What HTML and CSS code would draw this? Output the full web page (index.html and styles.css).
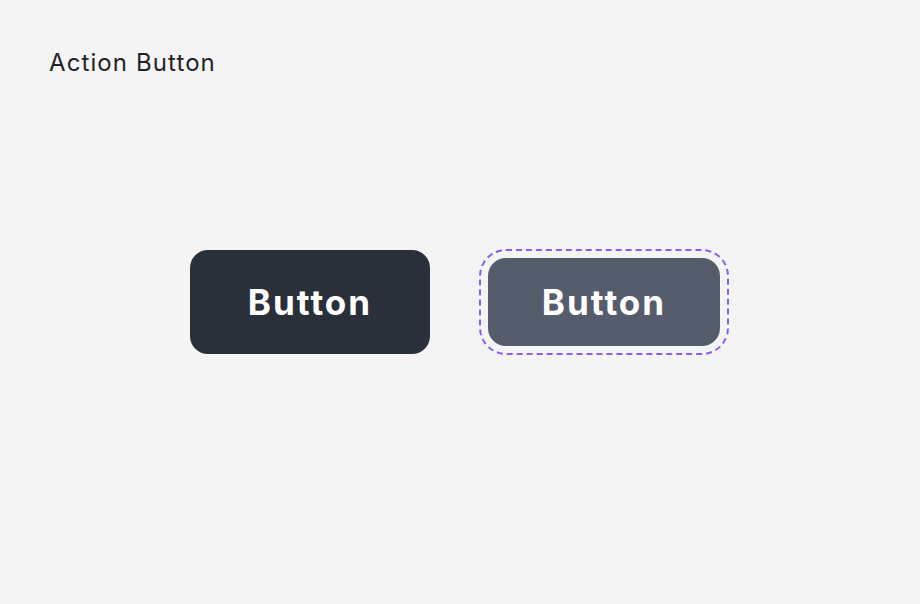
FILE: index.html
```html
<!DOCTYPE html>
<html lang="en">
  <head>
    <meta charset="UTF-8" />
    <meta name="viewport" content="width=device-width, initial-scale=1.0" />
    <title>Action Button</title>
    <link rel="stylesheet" href="styles.css">
  </head>
  <body>
    <div class="page">
      <h1 class="title">Action Button</h1>

      <div class="stage">
        <button type="button" class="action-btn">Button</button>
        <button type="button" class="action-btn focused">Button</button>
      </div>
    </div>
  </body>
</html>
```

FILE: styles.css
```css
body {
  background-color: #f4f4f5;
  margin: 0;
  font-family: Inter, "Noto Sans", sans-serif;
}

.page {
  height: 604px;
  box-sizing: border-box;
  padding: 48px 49px;
}

.title {
  margin: 0;
  font-size: 24px;
  font-weight: 400;
  line-height: 30px;
  letter-spacing: 1.1px;
  color: #222327;
}

.stage {
  display: flex;
  justify-content: center;
  align-items: center;
  gap: 58px;
  height: 104px;
  margin-top: 172px;
  padding-right: 10px;
}

.action-btn {
  width: 240px;
  height: 104px;
  border: none;
  border-radius: 18px;
  background-color: #29303a;
  color: #ffffff;
  font-family: Inter, "Noto Sans", sans-serif;
  font-size: 35px;
  font-weight: 700;
  letter-spacing: 2px;
  cursor: pointer;
}

.action-btn.focused {
  width: 232px;
  height: 88px;
  background-color: #555c6c;
  outline: 2px dashed #8b5cf6;
  outline-offset: 7px;
}
```
